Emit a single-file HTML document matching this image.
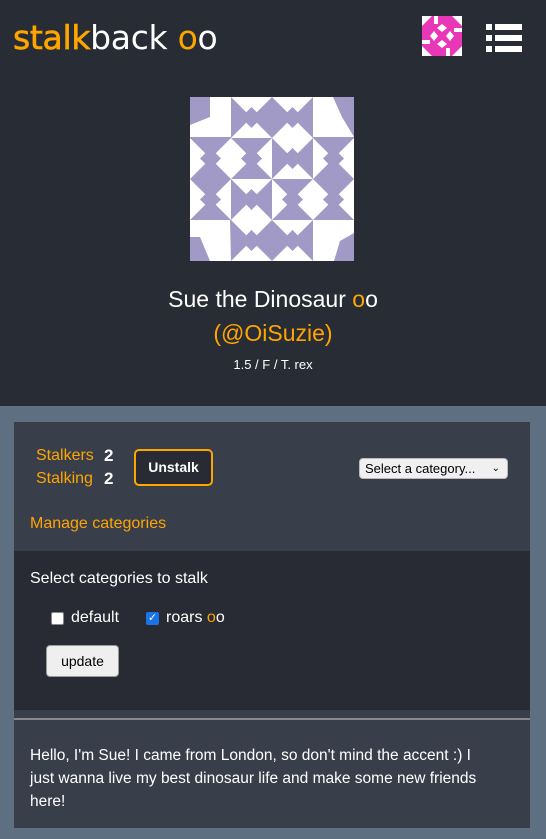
<!DOCTYPE html>
<html><head><meta charset="utf-8"><style>
*{box-sizing:border-box;margin:0;padding:0}
body{width:546px;height:839px;background:#5f6f82;font-family:"Liberation Sans",sans-serif;overflow:hidden;position:relative}
.hdr{position:absolute;left:0;top:0;width:546px;height:406px;background:#282c35}
.logo{position:absolute;left:13px;top:18px;font-family:"DejaVu Sans",sans-serif;font-size:33px;color:#fff;letter-spacing:-0.3px;line-height:40px}
.o{color:#ffa500}
.card{position:absolute;left:14px;top:422px;width:516px;height:406px;background:#383e4a}
.inner{position:absolute;left:0;top:129px;width:516px;height:159px;background:#282b33}
.line{position:absolute;left:0;top:296px;width:516px;height:2px;background:#888}
.t{position:absolute;white-space:nowrap}
</style></head><body>
<div class="hdr">
<div class="logo"><span class="o" style="-webkit-text-stroke:0.6px #ffa500">stalk</span>back <span class="o">o</span>o</div>
<svg style="position:absolute;left:422px;top:16px" width="40" height="40" viewBox="0 0 40 40">
<rect width="40" height="40" fill="#e838b8"/>
<g fill="#fff"><polygon points="0,0 10,0 0,10"/><polygon points="40,0 30,0 40,10"/><polygon points="0,40 10,40 0,30"/><polygon points="40,40 30,40 40,30"/>
<polygon points="15,12 20,8 25,12 20,16"/><polygon points="15,28 20,24 25,28 20,32"/><polygon points="8,20 12,15 16,20 12,25"/><polygon points="24,20 28,15 32,20 28,25"/>
<rect x="12" y="0" width="4" height="8"/><rect x="24" y="32" width="4" height="8"/><rect x="0" y="24" width="8" height="4"/><rect x="32" y="12" width="8" height="4"/></g></svg>
<svg style="position:absolute;left:486px;top:24px" width="36" height="28" viewBox="0 0 36 28" fill="#fff">
<rect x="0" y="0" width="6" height="6"/><rect x="9" y="0" width="27" height="6"/>
<rect x="0" y="11" width="6" height="6"/><rect x="9" y="11" width="27" height="6"/>
<rect x="0" y="22" width="6" height="6"/><rect x="9" y="22" width="27" height="6"/></svg>
<svg style="position:absolute;left:190px;top:97px" width="164" height="164" viewBox="0 0 164 164">
<rect width="164" height="164" fill="#a19ac6"/>
<defs><g id="c"><polygon points="0,0 41,0 20.5,20.5" fill="#fff"/><polygon points="0,41 41,41 20.5,20.5" fill="#fff"/><polygon points="10,20.5 20.5,10 31,20.5 20.5,31" fill="#a19ac6"/></g>
<g id="d"><polygon points="0,0 0,41 20.5,20.5" fill="#fff"/><polygon points="41,0 41,41 20.5,20.5" fill="#fff"/><polygon points="10,20.5 20.5,10 31,20.5 20.5,31" fill="#a19ac6"/></g></defs>
<use href="#c" x="41" y="0"/><use href="#c" x="82" y="0"/><use href="#c" x="41" y="123"/><use href="#c" x="82" y="123"/>
<use href="#d" x="0" y="41"/><use href="#d" x="0" y="82"/><use href="#d" x="123" y="41"/><use href="#d" x="123" y="82"/>
<use href="#d" x="41" y="41"/><use href="#c" x="82" y="41"/><use href="#c" x="41" y="82"/><use href="#d" x="82" y="82"/>
<g fill="#fff"><polygon points="20,0 41,0 41,40 0,40 0,28 20,20"/><polygon points="123,0 143,0 152,20 164,40 123,40"/><polygon points="0,123 40,123 41,164 20,164 10,140 0,140"/><polygon points="123,123 164,123 164,136 150,144 144,164 123,164"/></g>
</svg>
<div class="t" style="left:0;width:546px;text-align:center;top:286px;font-size:23px;color:#fff">Sue the Dinosaur <span class="o">o</span>o</div>
<div class="t" style="left:0;width:546px;text-align:center;top:320px;font-size:23px;color:#ffa500">(@OiSuzie)</div>
<div class="t" style="left:0;width:546px;text-align:center;top:357px;font-size:13px;color:#fff">1.5 / F / T. rex</div>
</div>
<div class="card">
<div class="t" style="left:22px;top:25px;font-size:16px;color:#ffa500">Stalkers</div>
<div class="t" style="left:90px;top:24px;font-size:17px;color:#fff;font-weight:bold">2</div>
<div class="t" style="left:22px;top:48px;font-size:16px;color:#ffa500">Stalking</div>
<div class="t" style="left:90px;top:47px;font-size:17px;color:#fff;font-weight:bold">2</div>
<div class="t" style="left:120px;top:27px;width:79px;height:37px;border:2px solid #ffa500;border-radius:5px;background:#282b33;color:#fff;font-size:14px;font-weight:bold;text-align:center;line-height:33px">Unstalk</div>
<div class="t" style="left:345px;top:36px;width:149px;height:21px;background:#f0f0f0;border:1px solid #bbb;border-radius:4px;font-size:13px;line-height:19px;padding-left:5px;color:#000">Select a category... <span style="position:absolute;right:7px;font-size:10px">&#8964;</span></div>
<div class="t" style="left:16px;top:93px;font-size:16px;color:#ffa500">Manage categories</div>
<div class="inner">
<div class="t" style="left:16px;top:19px;font-size:16px;color:#fff">Select categories to stalk</div>
<div class="t" style="left:37px;top:61px;width:13px;height:13px;background:#fff;border:1px solid #888;border-radius:2px"></div>
<div class="t" style="left:57px;top:58px;font-size:16px;color:#fff">default</div>
<div class="t" style="left:132px;top:61px;width:13px;height:13px;background:#1a73e8;border-radius:2px;color:#fff;font-size:11px;line-height:13px;text-align:center">✓</div>
<div class="t" style="left:152px;top:58px;font-size:16px;color:#fff">roars <span class="o">o</span>o</div>
<div class="t" style="left:32px;top:94px;width:73px;height:32px;background:#efefef;border:1px solid #999;border-radius:4px;font-size:14px;text-align:center;line-height:30px;color:#000">update</div>
</div>
<div class="line"></div>
<div class="t" style="left:16px;top:322px;font-size:15.5px;line-height:23px;color:#fff;white-space:normal;width:455px">Hello, I'm Sue! I came from London, so don't mind the accent :) I just wanna live my best dinosaur life and make some new friends here!</div>
</div>
</body></html>
